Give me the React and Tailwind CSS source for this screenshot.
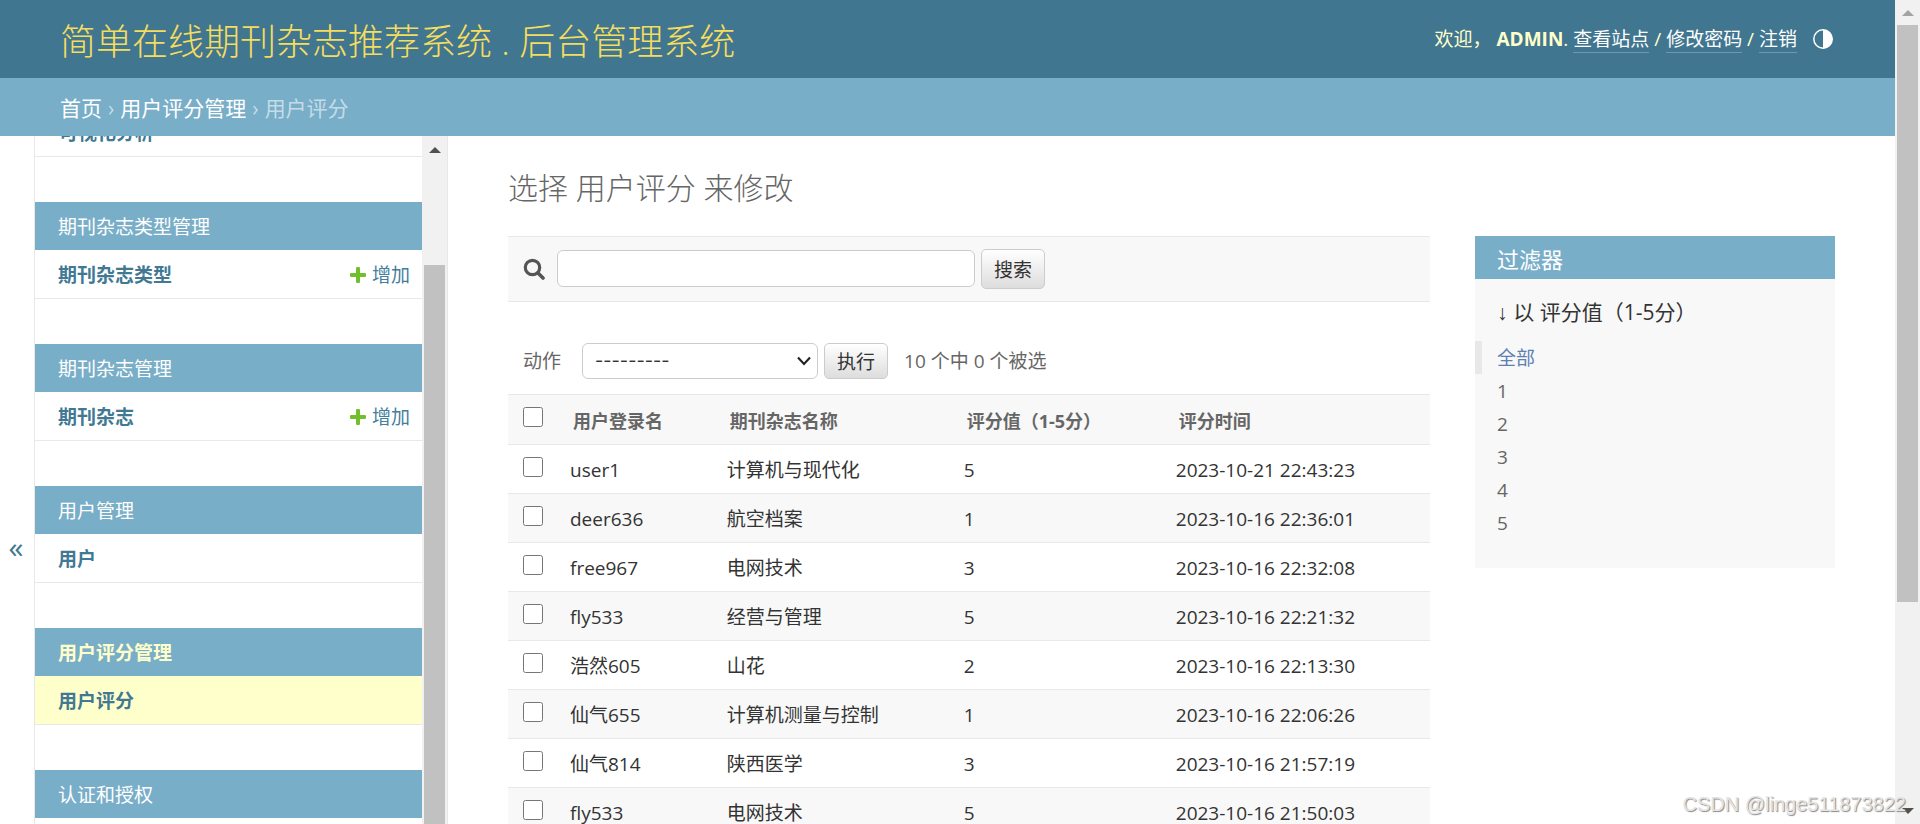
import React from "react";

const groups = [
  { title: "期刊杂志类型管理", item: "期刊杂志类型", add: true },
  { title: "期刊杂志管理", item: "期刊杂志", add: true },
  { title: "用户管理", item: "用户" },
  { title: "用户评分管理", item: "用户评分", current: true },
  { title: "认证和授权" },
];

const rows = [
  ["user1", "计算机与现代化", "5", "2023-10-21 22:43:23"],
  ["deer636", "航空档案", "1", "2023-10-16 22:36:01"],
  ["free967", "电网技术", "3", "2023-10-16 22:32:08"],
  ["fly533", "经营与管理", "5", "2023-10-16 22:21:32"],
  ["浩然605", "山花", "2", "2023-10-16 22:13:30"],
  ["仙气655", "计算机测量与控制", "1", "2023-10-16 22:06:26"],
  ["仙气814", "陕西医学", "3", "2023-10-16 21:57:19"],
  ["fly533", "电网技术", "5", "2023-10-16 21:50:03"],
];

const ratings = ["1", "2", "3", "4", "5"];

function Header() {
  return (
    <header className="flex h-[78px] shrink-0 items-center justify-between bg-[#417690] px-[60px] text-[#ffffcc]">
      <a href="#" className="pt-1.5 text-[36px] leading-[48px] font-light text-[#f5dd5d]">
        简单在线期刊杂志推荐系统 . 后台管理系统
      </a>
      <div className="flex items-center gap-4 text-[19px] leading-6">
        <div className="whitespace-nowrap">
          欢迎， <strong className="font-bold">ADMIN</strong>.{" "}
          <a href="#" className="border-b border-white/25 text-white">查看站点</a> /{" "}
          <a href="#" className="border-b border-white/25 text-white">修改密码</a> /{" "}
          <a href="#" className="border-b border-white/25 text-white">注销</a>
        </div>
        <button type="button" aria-label="Toggle theme" className="mr-0.5">
          <svg className="block size-5" viewBox="0 0 20 20" fill="none">
            <circle cx="10" cy="10" r="9.2" stroke="#fff" strokeWidth="1.5" />
            <path d="M10 0.5a9.5 9.5 0 0 1 0 19z" fill="#fff" />
          </svg>
        </button>
      </div>
    </header>
  );
}

function Breadcrumbs() {
  return (
    <nav className="flex h-[58px] shrink-0 items-center gap-1.5 bg-[#79aec8] px-[60px] pt-0.5 text-[21px] leading-8 text-[#c4dce8]">
      <a href="#" className="text-white">首页</a>
      <span>›</span>
      <a href="#" className="text-white">用户评分管理</a>
      <span>›</span>
      <span>用户评分</span>
    </nav>
  );
}

function Plus() {
  return (
    <svg className="size-4" viewBox="0 0 16 16" fill="#70bf2b">
      <path d="M6 1.2Q6 0 7.2 0h1.6Q10 0 10 1.2V6h4.8Q16 6 16 7.2v1.6Q16 10 14.8 10H10v4.8Q10 16 8.8 16H7.2Q6 16 6 14.8V10H1.2Q0 10 0 8.8V7.2Q0 6 1.2 6H6z" />
    </svg>
  );
}

function Sidebar() {
  return (
    <nav className="flex w-[414px] shrink-0 overflow-hidden border-x border-[#e8e8e8]">
      <div className="min-w-0 flex-1">
        <div className="flex h-[21px] items-end overflow-hidden border-b border-[#e8e8e8]">
          <a href="#" className="px-6 pb-[9px] text-[19px] leading-7 font-bold text-[#417893]">可视化分析</a>
        </div>
        {groups.map((g) => (
          <section key={g.title} className="pt-[45px]">
            <h2
              className={
                g.current
                  ? "h-12 bg-[#79aec8] px-[23px] pt-0.5 text-[19px] leading-[46px] font-bold text-[#ffffcc]"
                  : "h-12 bg-[#79aec8] px-[23px] pt-0.5 text-[19px] leading-[46px] text-white"
              }
            >
              <a href="#">{g.title}</a>
            </h2>
            {g.item && (
              <div
                className={
                  g.current
                    ? "flex h-[49px] items-center justify-between border-b border-[#e8e8e8] bg-[#ffffcc] pt-0.5 pr-3 pl-[23px]"
                    : "flex h-[49px] items-center justify-between border-b border-[#e8e8e8] pt-0.5 pr-3 pl-[23px]"
                }
              >
                <a href="#" className="text-[19px] leading-7 font-bold text-[#417893]">{g.item}</a>
                {g.add && (
                  <a href="#" className="flex items-center gap-1.5 text-[19px] leading-7 text-[#447e9b]">
                    <Plus />
                    增加
                  </a>
                )}
              </div>
            )}
          </section>
        ))}
      </div>
      <div className="flex w-[25px] shrink-0 flex-col items-center bg-[#f1f1f1] pt-[11px]">
        <svg className="h-1.5 w-3 shrink-0" viewBox="0 0 12 6"><path d="M6 0l6 6H0z" fill="#505050" /></svg>
        <div className="mt-28 w-[21px] flex-1 bg-[#c1c1c1]" />
      </div>
    </nav>
  );
}

const buttonLook =
  "rounded-[5px] border border-[#cccccc] bg-linear-to-b from-white to-[#dddddd] px-3 pt-0.5 text-[19px] leading-7 text-[#333333]";

function ChangeList() {
  return (
    <div className="min-w-0 flex-1">
      <form className="flex h-[66px] items-center border-y border-[#e8e8e8] bg-[#f8f8f8] px-[15px]">
        <label htmlFor="searchbar" aria-label="搜索">
          <svg className="size-[22px]" viewBox="0 0 22 22" fill="none" stroke="#555555">
            <circle cx="9.5" cy="9.5" r="7.2" strokeWidth="3.2" />
            <path d="M15 15L20 20" strokeWidth="3.6" strokeLinecap="round" />
          </svg>
        </label>
        <input id="searchbar" type="text" className="mb-0.5 ml-3 h-[37px] w-[418px] rounded-[6px] border border-[#cccccc] bg-white px-2 text-[19px]" />
        <button type="submit" className={"ml-1.5 h-10 " + buttonLook}>搜索</button>
      </form>

      <div className="mt-[41px] mb-[15px] flex items-center pl-[15px] text-[19px] leading-7 text-[#666666]">
        <label htmlFor="action">动作</label>
        <div className="ml-[21px] grid items-center">
          <select
            id="action"
            className="col-start-1 row-start-1 h-9 w-[236px] appearance-none rounded-[6px] border border-[#cccccc] bg-white pl-3 font-['Inter',sans-serif] text-[18px] text-[#333333]"
          >
            <option>---------</option>
          </select>
          <svg className="pointer-events-none col-start-1 row-start-1 mr-1.5 h-3 w-4 justify-self-end" viewBox="0 0 16 12" fill="none" stroke="#222222" strokeWidth="2.1">
            <path d="M2 2.5L8 9l6-6.5" />
          </svg>
        </div>
        <button type="button" className={"ml-1.5 h-9 " + buttonLook}>执行</button>
        <span className="ml-4">10 个中 0 个被选</span>
      </div>

      <table className="w-full table-fixed border-collapse text-left">
        <colgroup>
          <col className="w-[50px]" />
          <col className="w-[17%]" />
          <col className="w-[237px]" />
          <col className="w-[23%]" />
          <col />
        </colgroup>
        <thead>
          <tr className="h-[50px] border-y border-[#e8e8e8] bg-[#f8f8f8] text-[18px] leading-6 font-bold text-[#666666]">
            <th className="pl-[15px]">
              <input type="checkbox" aria-label="全选" className="mb-1.5 block size-5" />
            </th>
            {["用户登录名", "期刊杂志名称", "评分值（1-5分）", "评分时间"].map((h) => (
              <th key={h} className="pt-0.5 pl-[15px] whitespace-nowrap">{h}</th>
            ))}
          </tr>
        </thead>
        <tbody>
          {rows.map((r) => (
            <tr key={r[3]} className="h-[49px] border-b border-[#e8e8e8] text-[19px] leading-7 text-[#333333] even:bg-[#f8f8f8]">
              <td className="pl-[15px]">
                <input type="checkbox" aria-label={r[0]} className="mb-1 block size-5" />
              </td>
              {r.map((c, i) => (
                <td key={i} className="pt-0.5 pl-3 whitespace-nowrap">{c}</td>
              ))}
            </tr>
          ))}
        </tbody>
      </table>
    </div>
  );
}

function Filters() {
  return (
    <aside className="w-[360px] shrink-0 bg-[#f8f8f8] pb-[29px]">
      <h2 className="h-[43px] bg-[#79aec8] px-[22px] pt-1 text-[22px] leading-[39px] text-white">过滤器</h2>
      <h3 className="px-[22px] pt-[17px] pb-[12px] text-[21px] leading-8 text-[#333333]">
        <span className="font-['Liberation_Sans',sans-serif]">↓ </span>以 评分值（1-5分）
      </h3>
      <ul className="text-[19px] text-[#666666]">
        <li className="border-l-[7px] border-[#e8e8e8] pt-0.5 pl-[15px] leading-[31px] text-[#5b80b2]">
          <a href="#">全部</a>
        </li>
        {ratings.map((n) => (
          <li key={n} className="pt-0.5 pl-[22px] leading-[31px]">
            <a href="#">{n}</a>
          </li>
        ))}
      </ul>
    </aside>
  );
}

export default function App() {
  return (
    <div className="relative flex h-screen overflow-hidden bg-white font-['Open_Sans','Noto_Sans_CJK_SC',sans-serif]">
      <div className="flex min-w-0 flex-1 flex-col">
        <Header />
        <Breadcrumbs />
        <div className="flex min-h-0 flex-1 overflow-hidden">
          <button type="button" aria-label="切换导航" className="h-screen w-[34px] shrink-0 pr-1 pb-1 pl-0.5 text-[30px] text-[#417893]">
            «
          </button>
          <Sidebar />
          <main className="min-w-0 flex-1 px-[60px] pt-8">
            <h1 className="mb-[28px] text-[30px] leading-10 font-light text-[#666666]">选择 用户评分 来修改</h1>
            <div className="flex items-start gap-[45px]">
              <ChangeList />
              <Filters />
            </div>
          </main>
        </div>
      </div>
      <div className="flex w-[25px] shrink-0 flex-col items-center bg-[#f1f1f1] py-2.5">
        <svg className="h-1.5 w-3 shrink-0" viewBox="0 0 12 6"><path d="M6 0l6 6H0z" fill="#a3a3a3" /></svg>
        <div className="mt-[9px] h-[577px] w-[21px] bg-[#c1c1c1]" />
        <svg className="mt-auto h-1.5 w-3 shrink-0" viewBox="0 0 12 6"><path d="M0 0h12L6 6z" fill="#505050" /></svg>
      </div>
      <div className="pointer-events-none absolute right-[14px] bottom-2 font-['Liberation_Sans',sans-serif] text-[20px] leading-6 text-[#e4e4e4] [text-shadow:1px_1px_1px_#888888]">
        CSDN @linge511873822
      </div>
    </div>
  );
}
